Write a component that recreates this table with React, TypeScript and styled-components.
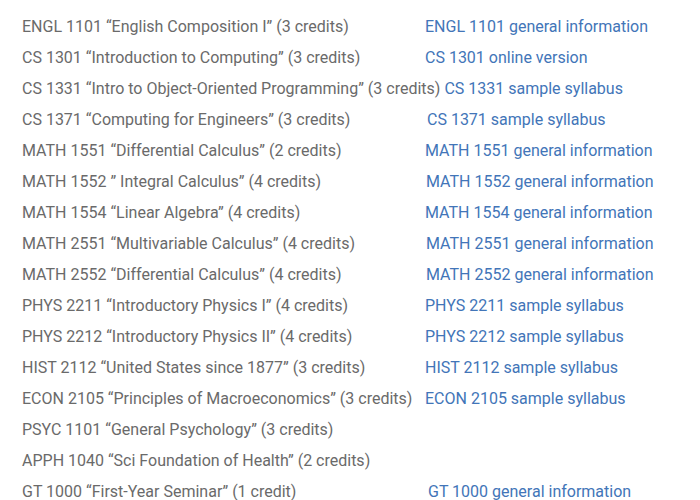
import * as React from 'react'
import styled, { createGlobalStyle } from 'styled-components'

const GlobalStyle = createGlobalStyle`
  body {
    margin: 0;
    background: #fff;
    font-family: Roboto, 'Liberation Sans', sans-serif;
  }
`

const List = styled.div`
  display: flex;
  flex-direction: column;
  padding: 11px 0 0 22px;
`

const Row = styled.div`
  display: flex;
  align-items: baseline;
  gap: 4px;
  height: 31px;
  line-height: 31px;
  font-size: 16px;
  white-space: nowrap;
`

const Course = styled.span`
  min-width: 399px;
  color: #6a6a6a;
`

const CourseLink = styled.a<{ $shift?: number }>`
  margin-left: ${p => p.$shift || 0}px;
  color: #4275b8;
  text-decoration: none;
`

type Item = { course: string; link?: string; shift?: number }

const items: Item[] = [
  { course: 'ENGL 1101 “English Composition I” (3 credits)', link: 'ENGL 1101 general information' },
  { course: 'CS 1301 “Introduction to Computing” (3 credits)', link: 'CS 1301 online version' },
  { course: 'CS 1331 “Intro to Object-Oriented Programming” (3 credits)', link: 'CS 1331 sample syllabus' },
  { course: 'CS 1371 “Computing for Engineers” (3 credits)', link: 'CS 1371 sample syllabus', shift: 2 },
  { course: 'MATH 1551 “Differential Calculus” (2 credits)', link: 'MATH 1551 general information' },
  { course: 'MATH 1552 ” Integral Calculus” (4 credits)', link: 'MATH 1552 general information', shift: 1 },
  { course: 'MATH 1554 “Linear Algebra” (4 credits)', link: 'MATH 1554 general information' },
  { course: 'MATH 2551 “Multivariable Calculus” (4 credits)', link: 'MATH 2551 general information', shift: 1 },
  { course: 'MATH 2552 “Differential Calculus” (4 credits)', link: 'MATH 2552 general information', shift: 1 },
  { course: 'PHYS 2211 “Introductory Physics I” (4 credits)', link: 'PHYS 2211 sample syllabus' },
  { course: 'PHYS 2212 “Introductory Physics II” (4 credits)', link: 'PHYS 2212 sample syllabus' },
  { course: 'HIST 2112 “United States since 1877” (3 credits)', link: 'HIST 2112 sample syllabus' },
  { course: 'ECON 2105 “Principles of Macroeconomics” (3 credits)', link: 'ECON 2105 sample syllabus' },
  { course: 'PSYC 1101 “General Psychology” (3 credits)' },
  { course: 'APPH 1040 “Sci Foundation of Health” (2 credits)' },
  { course: 'GT 1000 “First-Year Seminar” (1 credit)', link: 'GT 1000 general information', shift: 3 },
]

export default function App() {
  return (
    <>
      <GlobalStyle />
      <List>
        {items.map(it => (
          <Row key={it.course}>
            <Course>{it.course}</Course>
            {it.link && <CourseLink href="#" $shift={it.shift}>{it.link}</CourseLink>}
          </Row>
        ))}
      </List>
    </>
  )
}
